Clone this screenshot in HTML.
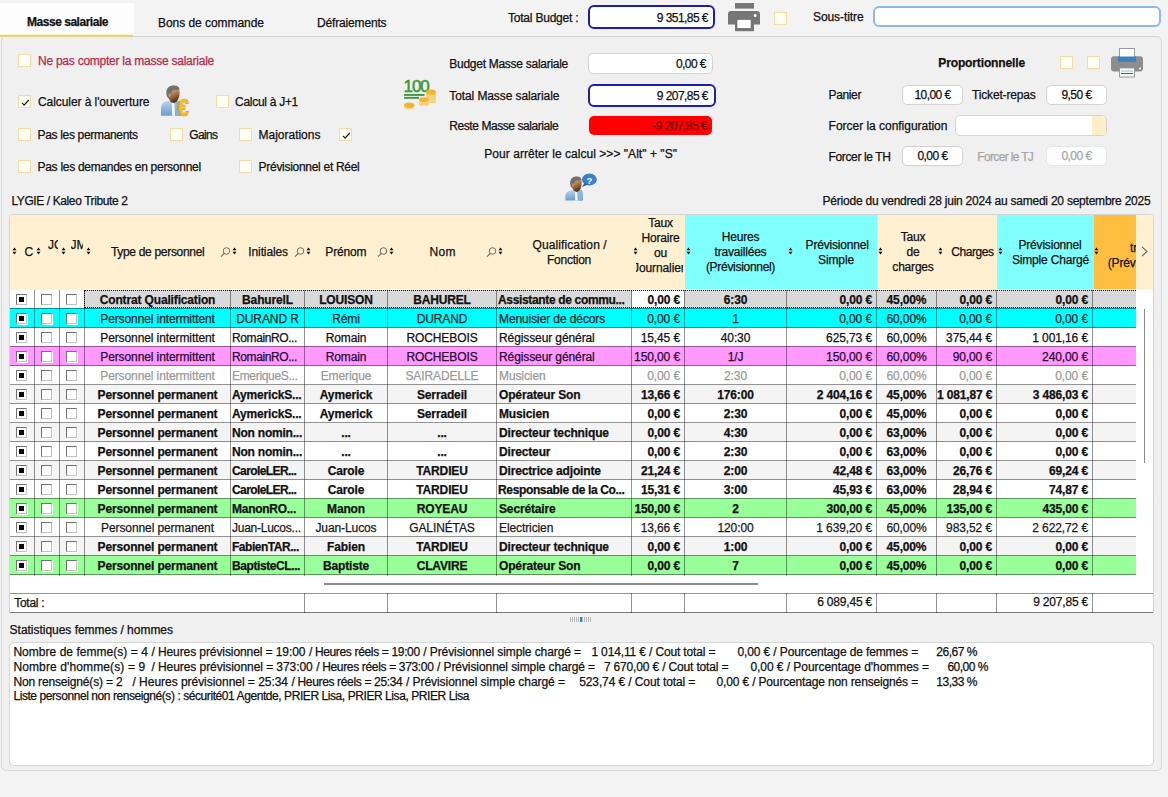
<!DOCTYPE html>
<html><head><meta charset="utf-8"><title>Masse salariale</title><style>
html,body{margin:0;padding:0;}
body{width:1168px;height:797px;overflow:hidden;background:#f3f3f3;position:relative;font-family:"Liberation Sans",sans-serif;font-size:12px;color:#111;}
.a{position:absolute;}
.t{position:absolute;white-space:nowrap;line-height:14px;-webkit-text-stroke:0.25px currentColor;}
.cb{position:absolute;width:13px;height:13px;box-sizing:border-box;border:1px solid #f4dca4;background:#fffff4;}
.gcb{position:absolute;width:11px;height:11px;box-sizing:border-box;border:1px solid;border-color:#727272 #c2c2c2 #c2c2c2 #727272;background:#fff;box-shadow:1px 1px 0 #fff;}
.gcb i{position:absolute;left:2px;top:2px;width:5px;height:5px;background:#000;}
</style></head><body>
<div class="a" style="left:0px;top:3px;width:134px;height:32px;background:#fdfdfd;"></div>
<div class="a" style="left:0px;top:35px;width:133px;height:2px;background:#ebd38e;"></div>
<div class="t" style="left:27px;top:14.8px;font-size:12px;font-weight:bold;letter-spacing:-0.471px;">Masse salariale</div>
<div class="t" style="left:158px;top:15.8px;font-size:12px;letter-spacing:-0.046px;">Bons de commande</div>
<div class="t" style="left:317px;top:15.8px;font-size:12px;letter-spacing:-0.163px;">Défraiements</div>
<div class="t" style="left:508px;top:10.8px;font-size:12px;letter-spacing:-0.213px;">Total Budget :</div>
<div class="a" style="left:588px;top:5px;width:127px;height:24px;box-sizing:border-box;border:2px solid #1c1cb8;border-radius:6px;background:#fff;"></div>
<div class="t" style="left:590px;top:11px;width:118px;text-align:right;letter-spacing:-0.55px">9 351,85 €</div>
<svg class="a" style="left:726px;top:1px" width="36" height="32" viewBox="726 1 36 32">
<rect x="735" y="3" width="19" height="5.6" fill="#767676"/>
<path d="M731 11 H757 Q760 11 760 14 V24.6 H728 V14 Q728 11 731 11 Z" fill="#767676"/>
<rect x="735" y="11" width="19" height="20.2" fill="#767676"/>
<rect x="737.4" y="19.9" width="13.3" height="8.1" fill="#fff"/>
<circle cx="755.2" cy="15.6" r="1.5" fill="#fff"/>
</svg>
<div class="cb" style="left:774px;top:12px"></div>
<div class="t" style="left:813px;top:9.8px;font-size:12px;letter-spacing:-0.085px;">Sous-titre</div>
<div class="a" style="left:873px;top:6px;width:288px;height:21px;box-sizing:border-box;border:2px solid #8fb8e6;border-radius:6px;background:#fff;"></div>
<div class="a" style="left:1px;top:36px;width:1161px;height:735px;box-sizing:border-box;border:1px solid #d6d6d6;border-radius:5px;background:#f0f0f0;"></div>
<div class="a" style="left:0px;top:34px;width:133px;height:1px;background:#fbf3c8;"></div>
<div class="a" style="left:0px;top:35px;width:133px;height:2px;background:#e6cf86;"></div>
<div class="a" style="left:0px;top:37px;width:133px;height:1px;background:#f8f0cc;"></div>
<div class="cb" style="left:18px;top:54px"></div>
<div class="t" style="left:38px;top:53.8px;font-size:12px;color:#b52a4c;letter-spacing:-0.245px;">Ne pas compter la masse salariale</div>
<div class="cb" style="left:18px;top:95px"><svg width="13" height="13" style="position:absolute;left:0;top:0"><path d="M3 6.9 L5.1 9.1 L9.8 4.0" fill="none" stroke="#1e1e28" stroke-width="1.25"/></svg></div>
<div class="t" style="left:38px;top:94.8px;font-size:12px;letter-spacing:-0.073px;">Calculer à l'ouverture</div>
<div class="cb" style="left:216px;top:95px"></div>
<div class="t" style="left:235px;top:94.8px;font-size:12px;letter-spacing:-0.281px;">Calcul à J+1</div>
<div class="cb" style="left:18px;top:128px"></div>
<div class="t" style="left:37.5px;top:127.8px;font-size:12px;letter-spacing:-0.325px;">Pas les permanents</div>
<div class="cb" style="left:170px;top:128px"></div>
<div class="t" style="left:189.3px;top:127.8px;font-size:12px;letter-spacing:-0.669px;">Gains</div>
<div class="cb" style="left:239px;top:128px"></div>
<div class="t" style="left:258.6px;top:127.8px;font-size:12px;letter-spacing:-0.021px;">Majorations</div>
<div class="cb" style="left:339px;top:128px"><svg width="13" height="13" style="position:absolute;left:0;top:0"><path d="M3 6.9 L5.1 9.1 L9.8 4.0" fill="none" stroke="#1e1e28" stroke-width="1.25"/></svg></div>
<div class="cb" style="left:18px;top:160px"></div>
<div class="t" style="left:37.5px;top:159.8px;font-size:12px;letter-spacing:-0.281px;">Pas les demandes en personnel</div>
<div class="cb" style="left:239px;top:160px"></div>
<div class="t" style="left:258.6px;top:159.8px;font-size:12px;letter-spacing:-0.291px;">Prévisionnel et Réel</div>
<div class="t" style="left:11.4px;top:193.8px;font-size:12px;letter-spacing:-0.395px;">LYGIE / Kaleo Tribute 2</div>
<div class="t" style="left:449.3px;top:56.8px;font-size:12px;letter-spacing:-0.274px;">Budget Masse salariale</div>
<div class="a" style="left:588px;top:53px;width:125px;height:21px;box-sizing:border-box;border:1px solid #d3d3d3;border-radius:5px;background:#fff;"></div>
<div class="t" style="left:590px;top:57px;width:116px;text-align:right;letter-spacing:-0.55px">0,00 €</div>
<div class="t" style="left:449.3px;top:88.8px;font-size:12px;letter-spacing:-0.097px;">Total Masse salariale</div>
<div class="a" style="left:588px;top:84px;width:128px;height:23px;box-sizing:border-box;border:2px solid #1c1cb8;border-radius:6px;background:#fff;"></div>
<div class="t" style="left:590px;top:89px;width:118px;text-align:right;letter-spacing:-0.55px">9 207,85 €</div>
<div class="t" style="left:449.3px;top:119.3px;font-size:12px;letter-spacing:-0.431px;">Reste Masse salariale</div>
<div class="a" style="left:589px;top:116px;width:123px;height:19px;border-radius:5px;background:#ff0000;"></div>
<div class="t" style="left:590px;top:119px;width:117px;text-align:right;letter-spacing:-0.55px;color:#640000">-9 207,85 €</div>
<div class="t" style="left:484.3px;top:146.8px;font-size:12px;letter-spacing:0.041px;">Pour arrêter le calcul &gt;&gt;&gt; "Alt" + "S"</div>
<div class="t" style="left:938.3px;top:55.8px;font-size:12px;font-weight:bold;letter-spacing:-0.131px;">Proportionnelle</div>
<div class="cb" style="left:1060px;top:56px"></div>
<div class="cb" style="left:1087px;top:56px"></div>
<div class="t" style="left:828.6px;top:88.3px;font-size:12px;letter-spacing:-0.381px;">Panier</div>
<div class="a" style="left:902px;top:85px;width:61px;height:20px;box-sizing:border-box;border:1px solid #d3d3d3;border-radius:5px;background:#fff;"></div>
<div class="t" style="left:902px;top:88px;width:61px;text-align:center;letter-spacing:-0.55px">10,00 €</div>
<div class="t" style="left:972px;top:88.3px;font-size:12px;letter-spacing:-0.164px;">Ticket-repas</div>
<div class="a" style="left:1046px;top:85px;width:61px;height:20px;box-sizing:border-box;border:1px solid #d3d3d3;border-radius:5px;background:#fff;"></div>
<div class="t" style="left:1046px;top:88px;width:61px;text-align:center;letter-spacing:-0.55px">9,50 €</div>
<div class="t" style="left:828.6px;top:118.8px;font-size:12px;letter-spacing:-0.026px;">Forcer la configuration</div>
<div class="a" style="left:955px;top:115px;width:152px;height:21px;box-sizing:border-box;border:1px solid #d3d3d3;border-radius:5px;background:#fff;overflow:hidden;"></div>
<div class="a" style="left:1092px;top:116px;width:14px;height:19px;background:#fdf0c8;border-radius:0 4px 4px 0;"></div>
<div class="t" style="left:828.6px;top:149.8px;font-size:12px;letter-spacing:-0.371px;">Forcer le TH</div>
<div class="a" style="left:902px;top:146px;width:61px;height:20px;box-sizing:border-box;border:1px solid #d3d3d3;border-radius:5px;background:#fff;"></div>
<div class="t" style="left:902px;top:149px;width:61px;text-align:center;letter-spacing:-0.55px">0,00 €</div>
<div class="t" style="left:977.3px;top:149.8px;font-size:12px;color:#a6a6a6;letter-spacing:-0.658px;">Forcer le TJ</div>
<div class="a" style="left:1046px;top:146px;width:61px;height:20px;box-sizing:border-box;border:1px solid #e6e6e6;border-radius:5px;background:#fdfdfd;"></div>
<div class="t" style="left:1046px;top:149px;width:61px;text-align:center;letter-spacing:-0.55px;color:#a6a6a6">0,00 €</div>
<div class="t" style="left:822.6px;top:194.4px;font-size:12px;letter-spacing:-0.229px;">Période du vendredi 28 juin 2024 au samedi 20 septembre 2025</div>
<svg class="a" style="left:1108px;top:45px" width="38" height="36" viewBox="1108 45 38 36">
<path d="M1114 56.3 H1140 Q1143 56.3 1143 59.3 V68.6 Q1143 71.6 1140 71.6 H1114 Q1111 71.6 1111 68.6 V59.3 Q1111 56.3 1114 56.3 Z" fill="#8d8d8d"/>
<rect x="1119.5" y="48.5" width="15" height="9" fill="#fff" stroke="#999" stroke-width="1"/>
<rect x="1118" y="56.5" width="18" height="5.3" fill="#3b80c2"/>
<rect x="1119.5" y="68" width="15" height="9" fill="#fff" stroke="#999" stroke-width="1"/>
<rect x="1121" y="70.4" width="12" height="1.2" fill="#a8c4dc"/>
<rect x="1121" y="73" width="12" height="1" fill="#45617a"/>
<circle cx="1140" cy="68.6" r="1" fill="#fff"/>
</svg>
<svg class="a" style="left:398px;top:74px" width="44" height="40" viewBox="398 74 44 40">
<text x="403.6" y="92.3" font-family="Liberation Sans" font-size="17" fill="#3a9a3e" stroke="#3a9a3e" stroke-width="0.55" letter-spacing="-1.1">100</text>
<rect x="404" y="94" width="20.5" height="1.9" fill="#3d9a3d"/>
<rect x="404" y="96.9" width="15" height="1.9" fill="#3d9a3d"/>
<g>
<rect x="426" y="91" width="10" height="12" rx="2" fill="#fbd98c"/>
<path d="M426 94.5 h10 M426 97 h10 M426 99.5 h10 M426 102 h10" stroke="#f5c050" stroke-width="0.7"/>
<ellipse cx="431" cy="92" rx="5" ry="2.5" fill="#f2b431"/>
<rect x="419.2" y="98.5" width="9.6" height="7.5" rx="2" fill="#fbd98c"/>
<path d="M419.2 101.5 h9.6 M419.2 104 h9.6" stroke="#f5c050" stroke-width="0.7"/>
<ellipse cx="424" cy="99.8" rx="4.8" ry="2.5" fill="#f2b431"/>
<rect x="404" y="103.5" width="10.3" height="5.8" rx="2.5" fill="#fbd98c"/>
<ellipse cx="409.2" cy="105.3" rx="5.1" ry="2.7" fill="#f2b431"/>
</g>
</svg>
<svg class="a" style="left:156px;top:80px" width="40" height="40" viewBox="156 80 40 40"><g transform="translate(160,81.5) scale(0.98)">
<defs>
<linearGradient id="ska" x1="0" y1="0" x2="0.3" y2="1"><stop offset="0" stop-color="#ecc498"/><stop offset="0.55" stop-color="#b88050"/><stop offset="1" stop-color="#5a3418"/></linearGradient>
<linearGradient id="bda" x1="0" y1="0" x2="0" y2="1"><stop offset="0" stop-color="#b4d4f4"/><stop offset="1" stop-color="#6e9cca"/></linearGradient>
</defs>
<path d="M1 35 V27 Q1 21 8 20 L12 19.5 L20 19.5 Q21.5 20 21.5 24 V35 Z" fill="url(#bda)"/>
<path d="M12 19.5 L14.5 23 L15.5 35 H12.5 Z" fill="#f4f8fc"/>
<path d="M16 20 Q19 19.5 20.5 21 V35 H16.5 Z" fill="#8cb2dc"/>
<path d="M8 12 Q8 4 14 4 Q20 4 20 11 Q20 20 14.5 22 Q10.5 22 9 17 Z" fill="url(#ska)"/>
<path d="M6.5 13 Q6 4.5 13 4 Q19.5 3.5 20 8.5 Q15 8 12.5 9.5 Q11 12 10.5 16 L9 17.5 Q7 16 6.5 13 Z" fill="#707070"/>
<ellipse cx="9.8" cy="14" rx="1.2" ry="2" fill="#c89468"/>
</g><text transform="translate(177.8,116.2) scale(0.82,1)" x="0" y="0" font-family="Liberation Sans" font-weight="bold" font-size="24.5" fill="#f7c520" stroke="#e39c00" stroke-width="0.7">€</text></svg>
<svg class="a" style="left:560px;top:168px" width="44" height="36" viewBox="560 168 44 36"><g transform="translate(564.5,173) scale(0.86)">
<defs>
<linearGradient id="skb" x1="0" y1="0" x2="0.3" y2="1"><stop offset="0" stop-color="#ecc498"/><stop offset="0.55" stop-color="#b88050"/><stop offset="1" stop-color="#5a3418"/></linearGradient>
<linearGradient id="bdb" x1="0" y1="0" x2="0" y2="1"><stop offset="0" stop-color="#b4d4f4"/><stop offset="1" stop-color="#6e9cca"/></linearGradient>
</defs>
<path d="M1 32 V27 Q1 21 8 20 L12 19.5 L20 19.5 Q21.5 20 21.5 24 V32 Z" fill="url(#bdb)"/>
<path d="M12 19.5 L14.5 23 L15.5 32 H12.5 Z" fill="#f4f8fc"/>
<path d="M16 20 Q19 19.5 20.5 21 V32 H16.5 Z" fill="#8cb2dc"/>
<path d="M8 12 Q8 4 14 4 Q20 4 20 11 Q20 20 14.5 22 Q10.5 22 9 17 Z" fill="url(#skb)"/>
<path d="M6.5 13 Q6 4.5 13 4 Q19.5 3.5 20 8.5 Q15 8 12.5 9.5 Q11 12 10.5 16 L9 17.5 Q7 16 6.5 13 Z" fill="#707070"/>
<ellipse cx="9.8" cy="14" rx="1.2" ry="2" fill="#c89468"/>
</g><ellipse cx="589.4" cy="179.5" rx="7.4" ry="6" fill="#3a80cc"/><path d="M584.5 183 L582 187 L588 184.5 Z" fill="#2a5ea8"/><text x="586.6" y="183.6" font-family="Liberation Sans" font-weight="bold" font-size="9.5" fill="#fff">?</text></svg>
<div class="a" style="left:9px;top:214px;width:1145px;height:399px;box-sizing:border-box;border:1px solid #d4d4d4;border-radius:4px 4px 0 0;background:#fff;"></div>
<div class="a" style="left:10px;top:215px;width:675px;height:74px;background:#fff0d2;border-top-left-radius:3px;"></div>
<div class="a" style="left:685px;top:215px;width:192px;height:74px;background:#80ffff;"></div>
<div class="a" style="left:877px;top:215px;width:120px;height:74px;background:#fff0d2;"></div>
<div class="a" style="left:997px;top:215px;width:96px;height:74px;background:#80ffff;"></div>
<div class="a" style="left:1093px;top:215px;width:43px;height:74px;background:#ffbe40;"></div>
<div class="a" style="left:1136px;top:215px;width:17px;height:74px;background:#fff0d2;border-top-right-radius:3px;"></div>
<div class="a" style="left:10px;top:289px;width:1143px;height:1px;background:rgba(255,250,90,0.55);"></div>
<div class="a" style="left:1093px;top:215px;width:1px;height:74px;background:#d8e8a0;"></div>
<svg class="a" style="left:11.5px;top:247.3px" width="5" height="8" viewBox="0 0 5 8"><path d="M2.5 0.5 L4.5 3.2 H0.5 Z M0.5 4.7 H4.5 L2.5 7.4 Z" fill="#111"/></svg>
<svg class="a" style="left:35.9px;top:247.3px" width="5" height="8" viewBox="0 0 5 8"><path d="M2.5 0.5 L4.5 3.2 H0.5 Z M0.5 4.7 H4.5 L2.5 7.4 Z" fill="#111"/></svg>
<svg class="a" style="left:60.9px;top:247.3px" width="5" height="8" viewBox="0 0 5 8"><path d="M2.5 0.5 L4.5 3.2 H0.5 Z M0.5 4.7 H4.5 L2.5 7.4 Z" fill="#111"/></svg>
<svg class="a" style="left:85.9px;top:247.3px" width="5" height="8" viewBox="0 0 5 8"><path d="M2.5 0.5 L4.5 3.2 H0.5 Z M0.5 4.7 H4.5 L2.5 7.4 Z" fill="#111"/></svg>
<svg class="a" style="left:231.9px;top:247.3px" width="5" height="8" viewBox="0 0 5 8"><path d="M2.5 0.5 L4.5 3.2 H0.5 Z M0.5 4.7 H4.5 L2.5 7.4 Z" fill="#111"/></svg>
<svg class="a" style="left:305.9px;top:247.3px" width="5" height="8" viewBox="0 0 5 8"><path d="M2.5 0.5 L4.5 3.2 H0.5 Z M0.5 4.7 H4.5 L2.5 7.4 Z" fill="#111"/></svg>
<svg class="a" style="left:388.9px;top:247.3px" width="5" height="8" viewBox="0 0 5 8"><path d="M2.5 0.5 L4.5 3.2 H0.5 Z M0.5 4.7 H4.5 L2.5 7.4 Z" fill="#111"/></svg>
<svg class="a" style="left:497.9px;top:247.3px" width="5" height="8" viewBox="0 0 5 8"><path d="M2.5 0.5 L4.5 3.2 H0.5 Z M0.5 4.7 H4.5 L2.5 7.4 Z" fill="#111"/></svg>
<svg class="a" style="left:632.9px;top:247.3px" width="5" height="8" viewBox="0 0 5 8"><path d="M2.5 0.5 L4.5 3.2 H0.5 Z M0.5 4.7 H4.5 L2.5 7.4 Z" fill="#111"/></svg>
<svg class="a" style="left:685.9px;top:247.3px" width="5" height="8" viewBox="0 0 5 8"><path d="M2.5 0.5 L4.5 3.2 H0.5 Z M0.5 4.7 H4.5 L2.5 7.4 Z" fill="#111"/></svg>
<svg class="a" style="left:787.9px;top:247.3px" width="5" height="8" viewBox="0 0 5 8"><path d="M2.5 0.5 L4.5 3.2 H0.5 Z M0.5 4.7 H4.5 L2.5 7.4 Z" fill="#111"/></svg>
<svg class="a" style="left:877.9px;top:247.3px" width="5" height="8" viewBox="0 0 5 8"><path d="M2.5 0.5 L4.5 3.2 H0.5 Z M0.5 4.7 H4.5 L2.5 7.4 Z" fill="#111"/></svg>
<svg class="a" style="left:937.9px;top:247.3px" width="5" height="8" viewBox="0 0 5 8"><path d="M2.5 0.5 L4.5 3.2 H0.5 Z M0.5 4.7 H4.5 L2.5 7.4 Z" fill="#111"/></svg>
<svg class="a" style="left:997.9px;top:247.3px" width="5" height="8" viewBox="0 0 5 8"><path d="M2.5 0.5 L4.5 3.2 H0.5 Z M0.5 4.7 H4.5 L2.5 7.4 Z" fill="#111"/></svg>
<svg class="a" style="left:1093.9px;top:247.3px" width="5" height="8" viewBox="0 0 5 8"><path d="M2.5 0.5 L4.5 3.2 H0.5 Z M0.5 4.7 H4.5 L2.5 7.4 Z" fill="#111"/></svg>
<svg class="a" style="left:220px;top:245.5px" width="11" height="12" viewBox="0 0 11 12"><circle cx="6.5" cy="5" r="3.3" fill="none" stroke="#6a6152" stroke-width="0.95"/><path d="M4.2 7.4 L1.3 10.3" stroke="#6a6152" stroke-width="1.05" stroke-linecap="round"/></svg>
<svg class="a" style="left:294px;top:245.5px" width="11" height="12" viewBox="0 0 11 12"><circle cx="6.5" cy="5" r="3.3" fill="none" stroke="#6a6152" stroke-width="0.95"/><path d="M4.2 7.4 L1.3 10.3" stroke="#6a6152" stroke-width="1.05" stroke-linecap="round"/></svg>
<svg class="a" style="left:377px;top:245.5px" width="11" height="12" viewBox="0 0 11 12"><circle cx="6.5" cy="5" r="3.3" fill="none" stroke="#6a6152" stroke-width="0.95"/><path d="M4.2 7.4 L1.3 10.3" stroke="#6a6152" stroke-width="1.05" stroke-linecap="round"/></svg>
<svg class="a" style="left:486px;top:245.5px" width="11" height="12" viewBox="0 0 11 12"><circle cx="6.5" cy="5" r="3.3" fill="none" stroke="#6a6152" stroke-width="0.95"/><path d="M4.2 7.4 L1.3 10.3" stroke="#6a6152" stroke-width="1.05" stroke-linecap="round"/></svg>
<div class="t" style="left:24.6px;top:244.8px;font-size:12px;letter-spacing:0.000px;">C</div>
<div class="t" style="left:48px;top:238px;width:10px;overflow:hidden;font-size:12px;line-height:14px">JC</div>
<div class="t" style="left:70.5px;top:238px;width:12.5px;overflow:hidden;font-size:12px;line-height:14px">JM</div>
<div class="t" style="left:110.9px;top:244.8px;font-size:12px;letter-spacing:-0.308px;">Type de personnel</div>
<div class="t" style="left:248.3px;top:244.8px;font-size:12px;letter-spacing:-0.110px;">Initiales</div>
<div class="t" style="left:325.3px;top:244.8px;font-size:12px;letter-spacing:-0.153px;">Prénom</div>
<div class="t" style="left:429.4px;top:244.8px;font-size:12px;letter-spacing:0.355px;">Nom</div>
<div class="t" style="left:532.5px;top:237.8px;font-size:12px;letter-spacing:0.107px;">Qualification /</div>
<div class="t" style="left:547px;top:252.8px;font-size:12px;letter-spacing:-0.253px;">Fonction</div>
<div class="t" style="left:637px;top:216px;width:47px;text-align:center;letter-spacing:-0.2px;color:#111;overflow:hidden;line-height:15px">Taux</div>
<div class="t" style="left:637px;top:231px;width:47px;text-align:center;letter-spacing:-0.2px;color:#111;overflow:hidden;line-height:15px">Horaire</div>
<div class="t" style="left:637px;top:246px;width:47px;text-align:center;letter-spacing:-0.2px;color:#111;overflow:hidden;line-height:15px">ou</div>
<div class="t" style="left:636px;top:261px;width:47px;overflow:hidden;line-height:15px;white-space:nowrap"><span style="position:relative;left:-3px;letter-spacing:-0.1px">Journalier</span></div>
<div class="t" style="left:695px;top:230px;width:91px;text-align:center;letter-spacing:-0.2px;color:#111;overflow:hidden;line-height:15px">Heures</div>
<div class="t" style="left:695px;top:245px;width:91px;text-align:center;letter-spacing:-0.2px;color:#111;overflow:hidden;line-height:15px">travaillées</div>
<div class="t" style="left:695px;top:260px;width:91px;text-align:center;letter-spacing:-0.3px;color:#111;overflow:hidden;line-height:15px">(Prévisionnel)</div>
<div class="t" style="left:805.6px;top:237.8px;font-size:12px;letter-spacing:-0.197px;">Prévisionnel</div>
<div class="t" style="left:818px;top:252.8px;font-size:12px;letter-spacing:-0.113px;">Simple</div>
<div class="t" style="left:890px;top:230px;width:46px;text-align:center;letter-spacing:-0.2px;color:#111;overflow:hidden;line-height:15px">Taux</div>
<div class="t" style="left:890px;top:245px;width:46px;text-align:center;letter-spacing:-0.2px;color:#111;overflow:hidden;line-height:15px">de</div>
<div class="t" style="left:890px;top:260px;width:46px;text-align:center;letter-spacing:-0.2px;color:#111;overflow:hidden;line-height:15px">charges</div>
<div class="t" style="left:951.3px;top:244.8px;font-size:12px;letter-spacing:-0.422px;">Charges</div>
<div class="t" style="left:1018.5px;top:237.8px;font-size:12px;letter-spacing:-0.197px;">Prévisionnel</div>
<div class="t" style="left:1012px;top:252.8px;font-size:12px;letter-spacing:-0.182px;">Simple Chargé</div>
<div class="t" style="left:1093px;top:241px;width:43px;height:36px;overflow:hidden;line-height:15px;white-space:nowrap"><div style="position:absolute;left:37px;top:0">tr</div><div style="position:absolute;left:14.8px;top:15px;letter-spacing:-0.2px">(Prévisionnel)</div></div>
<svg class="a" style="left:1140px;top:245px" width="9" height="13" viewBox="0 0 9 13"><path d="M2 1.8 L7 6.5 L2 11.2" fill="none" stroke="#666" stroke-width="1.1"/></svg>
<div class="a" style="left:10px;top:290px;width:1126px;height:19px;background:#d9d9d9;"></div>
<div class="a" style="left:10px;top:290px;width:74px;height:18px;background:#fff;"></div>
<div class="a" style="left:632px;top:290px;width:52px;height:18px;background:#fff;"></div>
<div class="a" style="left:10px;top:328px;width:1126px;height:19px;background:#ffffff;"></div>
<div class="a" style="left:10px;top:366px;width:1126px;height:19px;background:#ffffff;"></div>
<div class="a" style="left:10px;top:385px;width:1126px;height:19px;background:#f4f4f4;"></div>
<div class="a" style="left:10px;top:404px;width:1126px;height:19px;background:#ffffff;"></div>
<div class="a" style="left:10px;top:423px;width:1126px;height:19px;background:#f4f4f4;"></div>
<div class="a" style="left:10px;top:442px;width:1126px;height:19px;background:#ffffff;"></div>
<div class="a" style="left:10px;top:461px;width:1126px;height:19px;background:#f4f4f4;"></div>
<div class="a" style="left:10px;top:480px;width:1126px;height:19px;background:#ffffff;"></div>
<div class="a" style="left:10px;top:518px;width:1126px;height:19px;background:#ffffff;"></div>
<div class="a" style="left:10px;top:537px;width:1126px;height:19px;background:#f4f4f4;"></div>
<div class="a" style="left:10px;top:308px;width:1126px;height:20px;background:#00ffff;"></div>
<div class="a" style="left:10px;top:346px;width:1126px;height:20px;background:#ff99ff;"></div>
<div class="a" style="left:10px;top:498px;width:1126px;height:20px;background:#99ff99;"></div>
<div class="a" style="left:10px;top:555px;width:1126px;height:20px;background:#99ff99;"></div>
<div class="a" style="left:10px;top:308px;width:1126px;height:1px;background:rgba(0,0,0,0.42);"></div>
<div class="a" style="left:10px;top:327px;width:1126px;height:1px;background:rgba(0,0,0,0.42);"></div>
<div class="a" style="left:10px;top:346px;width:1126px;height:1px;background:rgba(0,0,0,0.42);"></div>
<div class="a" style="left:10px;top:365px;width:1126px;height:1px;background:rgba(0,0,0,0.42);"></div>
<div class="a" style="left:10px;top:384px;width:1126px;height:1px;background:rgba(0,0,0,0.42);"></div>
<div class="a" style="left:10px;top:403px;width:1126px;height:1px;background:rgba(0,0,0,0.42);"></div>
<div class="a" style="left:10px;top:422px;width:1126px;height:1px;background:rgba(0,0,0,0.42);"></div>
<div class="a" style="left:10px;top:441px;width:1126px;height:1px;background:rgba(0,0,0,0.42);"></div>
<div class="a" style="left:10px;top:460px;width:1126px;height:1px;background:rgba(0,0,0,0.42);"></div>
<div class="a" style="left:10px;top:479px;width:1126px;height:1px;background:rgba(0,0,0,0.42);"></div>
<div class="a" style="left:10px;top:498px;width:1126px;height:1px;background:rgba(0,0,0,0.42);"></div>
<div class="a" style="left:10px;top:517px;width:1126px;height:1px;background:rgba(0,0,0,0.42);"></div>
<div class="a" style="left:10px;top:536px;width:1126px;height:1px;background:rgba(0,0,0,0.42);"></div>
<div class="a" style="left:10px;top:555px;width:1126px;height:1px;background:rgba(0,0,0,0.42);"></div>
<div class="a" style="left:10px;top:574px;width:1126px;height:1px;background:rgba(0,0,0,0.42);"></div>
<div class="gcb" style="left:16px;top:294px"><i></i></div>
<div class="gcb" style="left:41px;top:294px"></div>
<div class="gcb" style="left:66px;top:294px"></div>
<div class="t" style="left:85px;top:290px;width:145px;height:18px;line-height:21px;text-align:center;font-weight:bold;letter-spacing:-0.15px;overflow:hidden;white-space:nowrap">Contrat Qualification</div>
<div class="t" style="left:231px;top:290px;width:73px;height:18px;line-height:21px;text-align:center;font-weight:bold;letter-spacing:-0.15px;overflow:hidden;white-space:nowrap">BahurelL</div>
<div class="t" style="left:305px;top:290px;width:82px;height:18px;line-height:21px;text-align:center;font-weight:bold;letter-spacing:-0.15px;overflow:hidden;white-space:nowrap">LOUISON</div>
<div class="t" style="left:388px;top:290px;width:108px;height:18px;line-height:21px;text-align:center;font-weight:bold;letter-spacing:-0.15px;overflow:hidden;white-space:nowrap">BAHUREL</div>
<div class="t" style="left:497px;top:290px;width:134px;height:18px;line-height:21px;text-align:left;padding-left:1px;box-sizing:border-box;font-weight:bold;letter-spacing:-0.343px;overflow:hidden;white-space:nowrap">Assistante de commu...</div>
<div class="t" style="left:632px;top:290px;width:52px;height:18px;line-height:21px;text-align:right;padding-right:4px;box-sizing:border-box;font-weight:bold;letter-spacing:-0.15px;overflow:hidden;white-space:nowrap">0,00 €</div>
<div class="t" style="left:685px;top:290px;width:101px;height:18px;line-height:21px;text-align:center;font-weight:bold;letter-spacing:-0.15px;overflow:hidden;white-space:nowrap">6:30</div>
<div class="t" style="left:787px;top:290px;width:89px;height:18px;line-height:21px;text-align:right;padding-right:4px;box-sizing:border-box;font-weight:bold;letter-spacing:-0.15px;overflow:hidden;white-space:nowrap">0,00 €</div>
<div class="t" style="left:877px;top:290px;width:59px;height:18px;line-height:21px;text-align:center;font-weight:bold;letter-spacing:-0.15px;overflow:hidden;white-space:nowrap">45,00%</div>
<div class="t" style="left:937px;top:290px;width:59px;height:18px;line-height:21px;text-align:right;padding-right:4px;box-sizing:border-box;font-weight:bold;letter-spacing:-0.15px;overflow:hidden;white-space:nowrap">0,00 €</div>
<div class="t" style="left:997px;top:290px;width:95px;height:18px;line-height:21px;text-align:right;padding-right:4px;box-sizing:border-box;font-weight:bold;letter-spacing:-0.15px;overflow:hidden;white-space:nowrap">0,00 €</div>
<div class="gcb" style="left:16px;top:313px"><i></i></div>
<div class="gcb" style="left:41px;top:313px"></div>
<div class="gcb" style="left:66px;top:313px"></div>
<div class="t" style="left:85px;top:309px;width:145px;height:18px;line-height:21px;text-align:center;letter-spacing:-0.1px;color:#0a1a28;overflow:hidden;white-space:nowrap">Personnel intermittent</div>
<div class="t" style="left:231px;top:309px;width:73px;height:18px;line-height:21px;text-align:center;letter-spacing:-0.1px;color:#0a1a28;overflow:hidden;white-space:nowrap">DURAND R</div>
<div class="t" style="left:305px;top:309px;width:82px;height:18px;line-height:21px;text-align:center;letter-spacing:-0.1px;color:#0a1a28;overflow:hidden;white-space:nowrap">Rémi</div>
<div class="t" style="left:388px;top:309px;width:108px;height:18px;line-height:21px;text-align:center;letter-spacing:-0.1px;color:#0a1a28;overflow:hidden;white-space:nowrap">DURAND</div>
<div class="t" style="left:497px;top:309px;width:134px;height:18px;line-height:21px;text-align:left;padding-left:2px;box-sizing:border-box;letter-spacing:-0.1px;color:#0a1a28;overflow:hidden;white-space:nowrap">Menuisier de décors</div>
<div class="t" style="left:632px;top:309px;width:52px;height:18px;line-height:21px;text-align:right;padding-right:4px;box-sizing:border-box;letter-spacing:-0.1px;color:#0a1a28;overflow:hidden;white-space:nowrap">0,00 €</div>
<div class="t" style="left:685px;top:309px;width:101px;height:18px;line-height:21px;text-align:center;letter-spacing:-0.1px;color:#0a1a28;overflow:hidden;white-space:nowrap">1</div>
<div class="t" style="left:787px;top:309px;width:89px;height:18px;line-height:21px;text-align:right;padding-right:4px;box-sizing:border-box;letter-spacing:-0.1px;color:#0a1a28;overflow:hidden;white-space:nowrap">0,00 €</div>
<div class="t" style="left:877px;top:309px;width:59px;height:18px;line-height:21px;text-align:center;letter-spacing:-0.1px;color:#0a1a28;overflow:hidden;white-space:nowrap">60,00%</div>
<div class="t" style="left:937px;top:309px;width:59px;height:18px;line-height:21px;text-align:right;padding-right:4px;box-sizing:border-box;letter-spacing:-0.1px;color:#0a1a28;overflow:hidden;white-space:nowrap">0,00 €</div>
<div class="t" style="left:997px;top:309px;width:95px;height:18px;line-height:21px;text-align:right;padding-right:4px;box-sizing:border-box;letter-spacing:-0.1px;color:#0a1a28;overflow:hidden;white-space:nowrap">0,00 €</div>
<div class="gcb" style="left:16px;top:332px"><i></i></div>
<div class="gcb" style="left:41px;top:332px"></div>
<div class="gcb" style="left:66px;top:332px"></div>
<div class="t" style="left:85px;top:328px;width:145px;height:18px;line-height:21px;text-align:center;letter-spacing:-0.1px;overflow:hidden;white-space:nowrap">Personnel intermittent</div>
<div class="t" style="left:231px;top:328px;width:73px;height:18px;line-height:21px;text-align:left;padding-left:1px;box-sizing:border-box;letter-spacing:-0.396px;overflow:hidden;white-space:nowrap">RomainRO...</div>
<div class="t" style="left:305px;top:328px;width:82px;height:18px;line-height:21px;text-align:center;letter-spacing:-0.1px;overflow:hidden;white-space:nowrap">Romain</div>
<div class="t" style="left:388px;top:328px;width:108px;height:18px;line-height:21px;text-align:center;letter-spacing:-0.1px;overflow:hidden;white-space:nowrap">ROCHEBOIS</div>
<div class="t" style="left:497px;top:328px;width:134px;height:18px;line-height:21px;text-align:left;padding-left:2px;box-sizing:border-box;letter-spacing:-0.1px;overflow:hidden;white-space:nowrap">Régisseur général</div>
<div class="t" style="left:632px;top:328px;width:52px;height:18px;line-height:21px;text-align:right;padding-right:4px;box-sizing:border-box;letter-spacing:-0.1px;overflow:hidden;white-space:nowrap">15,45 €</div>
<div class="t" style="left:685px;top:328px;width:101px;height:18px;line-height:21px;text-align:center;letter-spacing:-0.1px;overflow:hidden;white-space:nowrap">40:30</div>
<div class="t" style="left:787px;top:328px;width:89px;height:18px;line-height:21px;text-align:right;padding-right:4px;box-sizing:border-box;letter-spacing:-0.1px;overflow:hidden;white-space:nowrap">625,73 €</div>
<div class="t" style="left:877px;top:328px;width:59px;height:18px;line-height:21px;text-align:center;letter-spacing:-0.1px;overflow:hidden;white-space:nowrap">60,00%</div>
<div class="t" style="left:937px;top:328px;width:59px;height:18px;line-height:21px;text-align:right;padding-right:4px;box-sizing:border-box;letter-spacing:-0.1px;overflow:hidden;white-space:nowrap">375,44 €</div>
<div class="t" style="left:997px;top:328px;width:95px;height:18px;line-height:21px;text-align:right;padding-right:4px;box-sizing:border-box;letter-spacing:-0.1px;overflow:hidden;white-space:nowrap">1 001,16 €</div>
<div class="gcb" style="left:16px;top:351px"><i></i></div>
<div class="gcb" style="left:41px;top:351px"></div>
<div class="gcb" style="left:66px;top:351px"></div>
<div class="t" style="left:85px;top:347px;width:145px;height:18px;line-height:21px;text-align:center;letter-spacing:-0.1px;color:#280a30;overflow:hidden;white-space:nowrap">Personnel intermittent</div>
<div class="t" style="left:231px;top:347px;width:73px;height:18px;line-height:21px;text-align:left;padding-left:1px;box-sizing:border-box;letter-spacing:-0.396px;color:#280a30;overflow:hidden;white-space:nowrap">RomainRO...</div>
<div class="t" style="left:305px;top:347px;width:82px;height:18px;line-height:21px;text-align:center;letter-spacing:-0.1px;color:#280a30;overflow:hidden;white-space:nowrap">Romain</div>
<div class="t" style="left:388px;top:347px;width:108px;height:18px;line-height:21px;text-align:center;letter-spacing:-0.1px;color:#280a30;overflow:hidden;white-space:nowrap">ROCHEBOIS</div>
<div class="t" style="left:497px;top:347px;width:134px;height:18px;line-height:21px;text-align:left;padding-left:2px;box-sizing:border-box;letter-spacing:-0.1px;color:#280a30;overflow:hidden;white-space:nowrap">Régisseur général</div>
<div class="t" style="left:632px;top:347px;width:52px;height:18px;line-height:21px;text-align:right;padding-right:4px;box-sizing:border-box;letter-spacing:-0.1px;color:#280a30;overflow:hidden;white-space:nowrap">150,00 €</div>
<div class="t" style="left:685px;top:347px;width:101px;height:18px;line-height:21px;text-align:center;letter-spacing:-0.1px;color:#280a30;overflow:hidden;white-space:nowrap">1/J</div>
<div class="t" style="left:787px;top:347px;width:89px;height:18px;line-height:21px;text-align:right;padding-right:4px;box-sizing:border-box;letter-spacing:-0.1px;color:#280a30;overflow:hidden;white-space:nowrap">150,00 €</div>
<div class="t" style="left:877px;top:347px;width:59px;height:18px;line-height:21px;text-align:center;letter-spacing:-0.1px;color:#280a30;overflow:hidden;white-space:nowrap">60,00%</div>
<div class="t" style="left:937px;top:347px;width:59px;height:18px;line-height:21px;text-align:right;padding-right:4px;box-sizing:border-box;letter-spacing:-0.1px;color:#280a30;overflow:hidden;white-space:nowrap">90,00 €</div>
<div class="t" style="left:997px;top:347px;width:95px;height:18px;line-height:21px;text-align:right;padding-right:4px;box-sizing:border-box;letter-spacing:-0.1px;color:#280a30;overflow:hidden;white-space:nowrap">240,00 €</div>
<div class="gcb" style="left:16px;top:370px"><i></i></div>
<div class="gcb" style="left:41px;top:370px"></div>
<div class="gcb" style="left:66px;top:370px"></div>
<div class="t" style="left:85px;top:366px;width:145px;height:18px;line-height:21px;text-align:center;letter-spacing:-0.1px;color:#9a9a9a;overflow:hidden;white-space:nowrap">Personnel intermittent</div>
<div class="t" style="left:231px;top:366px;width:73px;height:18px;line-height:21px;text-align:left;padding-left:1px;box-sizing:border-box;letter-spacing:-0.322px;color:#9a9a9a;overflow:hidden;white-space:nowrap">EmeriqueS...</div>
<div class="t" style="left:305px;top:366px;width:82px;height:18px;line-height:21px;text-align:center;letter-spacing:-0.1px;color:#9a9a9a;overflow:hidden;white-space:nowrap">Emerique</div>
<div class="t" style="left:388px;top:366px;width:108px;height:18px;line-height:21px;text-align:center;letter-spacing:-0.1px;color:#9a9a9a;overflow:hidden;white-space:nowrap">SAIRADELLE</div>
<div class="t" style="left:497px;top:366px;width:134px;height:18px;line-height:21px;text-align:left;padding-left:2px;box-sizing:border-box;letter-spacing:-0.1px;color:#9a9a9a;overflow:hidden;white-space:nowrap">Musicien</div>
<div class="t" style="left:632px;top:366px;width:52px;height:18px;line-height:21px;text-align:right;padding-right:4px;box-sizing:border-box;letter-spacing:-0.1px;color:#9a9a9a;overflow:hidden;white-space:nowrap">0,00 €</div>
<div class="t" style="left:685px;top:366px;width:101px;height:18px;line-height:21px;text-align:center;letter-spacing:-0.1px;color:#9a9a9a;overflow:hidden;white-space:nowrap">2:30</div>
<div class="t" style="left:787px;top:366px;width:89px;height:18px;line-height:21px;text-align:right;padding-right:4px;box-sizing:border-box;letter-spacing:-0.1px;color:#9a9a9a;overflow:hidden;white-space:nowrap">0,00 €</div>
<div class="t" style="left:877px;top:366px;width:59px;height:18px;line-height:21px;text-align:center;letter-spacing:-0.1px;color:#9a9a9a;overflow:hidden;white-space:nowrap">60,00%</div>
<div class="t" style="left:937px;top:366px;width:59px;height:18px;line-height:21px;text-align:right;padding-right:4px;box-sizing:border-box;letter-spacing:-0.1px;color:#9a9a9a;overflow:hidden;white-space:nowrap">0,00 €</div>
<div class="t" style="left:997px;top:366px;width:95px;height:18px;line-height:21px;text-align:right;padding-right:4px;box-sizing:border-box;letter-spacing:-0.1px;color:#9a9a9a;overflow:hidden;white-space:nowrap">0,00 €</div>
<div class="gcb" style="left:16px;top:389px"><i></i></div>
<div class="gcb" style="left:41px;top:389px"></div>
<div class="gcb" style="left:66px;top:389px"></div>
<div class="t" style="left:85px;top:385px;width:145px;height:18px;line-height:21px;text-align:center;font-weight:bold;letter-spacing:-0.15px;overflow:hidden;white-space:nowrap">Personnel permanent</div>
<div class="t" style="left:231px;top:385px;width:73px;height:18px;line-height:21px;text-align:left;padding-left:1px;box-sizing:border-box;font-weight:bold;letter-spacing:-0.175px;overflow:hidden;white-space:nowrap">AymerickS...</div>
<div class="t" style="left:305px;top:385px;width:82px;height:18px;line-height:21px;text-align:center;font-weight:bold;letter-spacing:-0.15px;overflow:hidden;white-space:nowrap">Aymerick</div>
<div class="t" style="left:388px;top:385px;width:108px;height:18px;line-height:21px;text-align:center;font-weight:bold;letter-spacing:-0.15px;overflow:hidden;white-space:nowrap">Serradeil</div>
<div class="t" style="left:497px;top:385px;width:134px;height:18px;line-height:21px;text-align:left;padding-left:2px;box-sizing:border-box;font-weight:bold;letter-spacing:-0.15px;overflow:hidden;white-space:nowrap">Opérateur Son</div>
<div class="t" style="left:632px;top:385px;width:52px;height:18px;line-height:21px;text-align:right;padding-right:4px;box-sizing:border-box;font-weight:bold;letter-spacing:-0.15px;overflow:hidden;white-space:nowrap">13,66 €</div>
<div class="t" style="left:685px;top:385px;width:101px;height:18px;line-height:21px;text-align:center;font-weight:bold;letter-spacing:-0.15px;overflow:hidden;white-space:nowrap">176:00</div>
<div class="t" style="left:787px;top:385px;width:89px;height:18px;line-height:21px;text-align:right;padding-right:4px;box-sizing:border-box;font-weight:bold;letter-spacing:-0.15px;overflow:hidden;white-space:nowrap">2 404,16 €</div>
<div class="t" style="left:877px;top:385px;width:59px;height:18px;line-height:21px;text-align:center;font-weight:bold;letter-spacing:-0.15px;overflow:hidden;white-space:nowrap">45,00%</div>
<div class="t" style="left:937px;top:385px;width:59px;height:18px;line-height:21px;text-align:right;padding-right:4px;box-sizing:border-box;font-weight:bold;letter-spacing:-0.15px;overflow:hidden;white-space:nowrap">1 081,87 €</div>
<div class="t" style="left:997px;top:385px;width:95px;height:18px;line-height:21px;text-align:right;padding-right:4px;box-sizing:border-box;font-weight:bold;letter-spacing:-0.15px;overflow:hidden;white-space:nowrap">3 486,03 €</div>
<div class="gcb" style="left:16px;top:408px"><i></i></div>
<div class="gcb" style="left:41px;top:408px"></div>
<div class="gcb" style="left:66px;top:408px"></div>
<div class="t" style="left:85px;top:404px;width:145px;height:18px;line-height:21px;text-align:center;font-weight:bold;letter-spacing:-0.15px;overflow:hidden;white-space:nowrap">Personnel permanent</div>
<div class="t" style="left:231px;top:404px;width:73px;height:18px;line-height:21px;text-align:left;padding-left:1px;box-sizing:border-box;font-weight:bold;letter-spacing:-0.175px;overflow:hidden;white-space:nowrap">AymerickS...</div>
<div class="t" style="left:305px;top:404px;width:82px;height:18px;line-height:21px;text-align:center;font-weight:bold;letter-spacing:-0.15px;overflow:hidden;white-space:nowrap">Aymerick</div>
<div class="t" style="left:388px;top:404px;width:108px;height:18px;line-height:21px;text-align:center;font-weight:bold;letter-spacing:-0.15px;overflow:hidden;white-space:nowrap">Serradeil</div>
<div class="t" style="left:497px;top:404px;width:134px;height:18px;line-height:21px;text-align:left;padding-left:2px;box-sizing:border-box;font-weight:bold;letter-spacing:-0.15px;overflow:hidden;white-space:nowrap">Musicien</div>
<div class="t" style="left:632px;top:404px;width:52px;height:18px;line-height:21px;text-align:right;padding-right:4px;box-sizing:border-box;font-weight:bold;letter-spacing:-0.15px;overflow:hidden;white-space:nowrap">0,00 €</div>
<div class="t" style="left:685px;top:404px;width:101px;height:18px;line-height:21px;text-align:center;font-weight:bold;letter-spacing:-0.15px;overflow:hidden;white-space:nowrap">2:30</div>
<div class="t" style="left:787px;top:404px;width:89px;height:18px;line-height:21px;text-align:right;padding-right:4px;box-sizing:border-box;font-weight:bold;letter-spacing:-0.15px;overflow:hidden;white-space:nowrap">0,00 €</div>
<div class="t" style="left:877px;top:404px;width:59px;height:18px;line-height:21px;text-align:center;font-weight:bold;letter-spacing:-0.15px;overflow:hidden;white-space:nowrap">45,00%</div>
<div class="t" style="left:937px;top:404px;width:59px;height:18px;line-height:21px;text-align:right;padding-right:4px;box-sizing:border-box;font-weight:bold;letter-spacing:-0.15px;overflow:hidden;white-space:nowrap">0,00 €</div>
<div class="t" style="left:997px;top:404px;width:95px;height:18px;line-height:21px;text-align:right;padding-right:4px;box-sizing:border-box;font-weight:bold;letter-spacing:-0.15px;overflow:hidden;white-space:nowrap">0,00 €</div>
<div class="gcb" style="left:16px;top:427px"><i></i></div>
<div class="gcb" style="left:41px;top:427px"></div>
<div class="gcb" style="left:66px;top:427px"></div>
<div class="t" style="left:85px;top:423px;width:145px;height:18px;line-height:21px;text-align:center;font-weight:bold;letter-spacing:-0.15px;overflow:hidden;white-space:nowrap">Personnel permanent</div>
<div class="t" style="left:231px;top:423px;width:73px;height:18px;line-height:21px;text-align:left;padding-left:1px;box-sizing:border-box;font-weight:bold;letter-spacing:-0.221px;overflow:hidden;white-space:nowrap">Non nomin...</div>
<div class="t" style="left:305px;top:423px;width:82px;height:18px;line-height:21px;text-align:center;font-weight:bold;letter-spacing:-0.15px;overflow:hidden;white-space:nowrap">...</div>
<div class="t" style="left:388px;top:423px;width:108px;height:18px;line-height:21px;text-align:center;font-weight:bold;letter-spacing:-0.15px;overflow:hidden;white-space:nowrap">...</div>
<div class="t" style="left:497px;top:423px;width:134px;height:18px;line-height:21px;text-align:left;padding-left:2px;box-sizing:border-box;font-weight:bold;letter-spacing:-0.15px;overflow:hidden;white-space:nowrap">Directeur technique</div>
<div class="t" style="left:632px;top:423px;width:52px;height:18px;line-height:21px;text-align:right;padding-right:4px;box-sizing:border-box;font-weight:bold;letter-spacing:-0.15px;overflow:hidden;white-space:nowrap">0,00 €</div>
<div class="t" style="left:685px;top:423px;width:101px;height:18px;line-height:21px;text-align:center;font-weight:bold;letter-spacing:-0.15px;overflow:hidden;white-space:nowrap">4:30</div>
<div class="t" style="left:787px;top:423px;width:89px;height:18px;line-height:21px;text-align:right;padding-right:4px;box-sizing:border-box;font-weight:bold;letter-spacing:-0.15px;overflow:hidden;white-space:nowrap">0,00 €</div>
<div class="t" style="left:877px;top:423px;width:59px;height:18px;line-height:21px;text-align:center;font-weight:bold;letter-spacing:-0.15px;overflow:hidden;white-space:nowrap">63,00%</div>
<div class="t" style="left:937px;top:423px;width:59px;height:18px;line-height:21px;text-align:right;padding-right:4px;box-sizing:border-box;font-weight:bold;letter-spacing:-0.15px;overflow:hidden;white-space:nowrap">0,00 €</div>
<div class="t" style="left:997px;top:423px;width:95px;height:18px;line-height:21px;text-align:right;padding-right:4px;box-sizing:border-box;font-weight:bold;letter-spacing:-0.15px;overflow:hidden;white-space:nowrap">0,00 €</div>
<div class="gcb" style="left:16px;top:446px"><i></i></div>
<div class="gcb" style="left:41px;top:446px"></div>
<div class="gcb" style="left:66px;top:446px"></div>
<div class="t" style="left:85px;top:442px;width:145px;height:18px;line-height:21px;text-align:center;font-weight:bold;letter-spacing:-0.15px;overflow:hidden;white-space:nowrap">Personnel permanent</div>
<div class="t" style="left:231px;top:442px;width:73px;height:18px;line-height:21px;text-align:left;padding-left:1px;box-sizing:border-box;font-weight:bold;letter-spacing:-0.221px;overflow:hidden;white-space:nowrap">Non nomin...</div>
<div class="t" style="left:305px;top:442px;width:82px;height:18px;line-height:21px;text-align:center;font-weight:bold;letter-spacing:-0.15px;overflow:hidden;white-space:nowrap">...</div>
<div class="t" style="left:388px;top:442px;width:108px;height:18px;line-height:21px;text-align:center;font-weight:bold;letter-spacing:-0.15px;overflow:hidden;white-space:nowrap">...</div>
<div class="t" style="left:497px;top:442px;width:134px;height:18px;line-height:21px;text-align:left;padding-left:2px;box-sizing:border-box;font-weight:bold;letter-spacing:-0.15px;overflow:hidden;white-space:nowrap">Directeur</div>
<div class="t" style="left:632px;top:442px;width:52px;height:18px;line-height:21px;text-align:right;padding-right:4px;box-sizing:border-box;font-weight:bold;letter-spacing:-0.15px;overflow:hidden;white-space:nowrap">0,00 €</div>
<div class="t" style="left:685px;top:442px;width:101px;height:18px;line-height:21px;text-align:center;font-weight:bold;letter-spacing:-0.15px;overflow:hidden;white-space:nowrap">2:30</div>
<div class="t" style="left:787px;top:442px;width:89px;height:18px;line-height:21px;text-align:right;padding-right:4px;box-sizing:border-box;font-weight:bold;letter-spacing:-0.15px;overflow:hidden;white-space:nowrap">0,00 €</div>
<div class="t" style="left:877px;top:442px;width:59px;height:18px;line-height:21px;text-align:center;font-weight:bold;letter-spacing:-0.15px;overflow:hidden;white-space:nowrap">63,00%</div>
<div class="t" style="left:937px;top:442px;width:59px;height:18px;line-height:21px;text-align:right;padding-right:4px;box-sizing:border-box;font-weight:bold;letter-spacing:-0.15px;overflow:hidden;white-space:nowrap">0,00 €</div>
<div class="t" style="left:997px;top:442px;width:95px;height:18px;line-height:21px;text-align:right;padding-right:4px;box-sizing:border-box;font-weight:bold;letter-spacing:-0.15px;overflow:hidden;white-space:nowrap">0,00 €</div>
<div class="gcb" style="left:16px;top:465px"><i></i></div>
<div class="gcb" style="left:41px;top:465px"></div>
<div class="gcb" style="left:66px;top:465px"></div>
<div class="t" style="left:85px;top:461px;width:145px;height:18px;line-height:21px;text-align:center;font-weight:bold;letter-spacing:-0.15px;overflow:hidden;white-space:nowrap">Personnel permanent</div>
<div class="t" style="left:231px;top:461px;width:73px;height:18px;line-height:21px;text-align:left;padding-left:1px;box-sizing:border-box;font-weight:bold;letter-spacing:-0.587px;overflow:hidden;white-space:nowrap">CaroleLER...</div>
<div class="t" style="left:305px;top:461px;width:82px;height:18px;line-height:21px;text-align:center;font-weight:bold;letter-spacing:-0.15px;overflow:hidden;white-space:nowrap">Carole</div>
<div class="t" style="left:388px;top:461px;width:108px;height:18px;line-height:21px;text-align:center;font-weight:bold;letter-spacing:-0.15px;overflow:hidden;white-space:nowrap">TARDIEU</div>
<div class="t" style="left:497px;top:461px;width:134px;height:18px;line-height:21px;text-align:left;padding-left:2px;box-sizing:border-box;font-weight:bold;letter-spacing:-0.15px;overflow:hidden;white-space:nowrap">Directrice adjointe</div>
<div class="t" style="left:632px;top:461px;width:52px;height:18px;line-height:21px;text-align:right;padding-right:4px;box-sizing:border-box;font-weight:bold;letter-spacing:-0.15px;overflow:hidden;white-space:nowrap">21,24 €</div>
<div class="t" style="left:685px;top:461px;width:101px;height:18px;line-height:21px;text-align:center;font-weight:bold;letter-spacing:-0.15px;overflow:hidden;white-space:nowrap">2:00</div>
<div class="t" style="left:787px;top:461px;width:89px;height:18px;line-height:21px;text-align:right;padding-right:4px;box-sizing:border-box;font-weight:bold;letter-spacing:-0.15px;overflow:hidden;white-space:nowrap">42,48 €</div>
<div class="t" style="left:877px;top:461px;width:59px;height:18px;line-height:21px;text-align:center;font-weight:bold;letter-spacing:-0.15px;overflow:hidden;white-space:nowrap">63,00%</div>
<div class="t" style="left:937px;top:461px;width:59px;height:18px;line-height:21px;text-align:right;padding-right:4px;box-sizing:border-box;font-weight:bold;letter-spacing:-0.15px;overflow:hidden;white-space:nowrap">26,76 €</div>
<div class="t" style="left:997px;top:461px;width:95px;height:18px;line-height:21px;text-align:right;padding-right:4px;box-sizing:border-box;font-weight:bold;letter-spacing:-0.15px;overflow:hidden;white-space:nowrap">69,24 €</div>
<div class="gcb" style="left:16px;top:484px"><i></i></div>
<div class="gcb" style="left:41px;top:484px"></div>
<div class="gcb" style="left:66px;top:484px"></div>
<div class="t" style="left:85px;top:480px;width:145px;height:18px;line-height:21px;text-align:center;font-weight:bold;letter-spacing:-0.15px;overflow:hidden;white-space:nowrap">Personnel permanent</div>
<div class="t" style="left:231px;top:480px;width:73px;height:18px;line-height:21px;text-align:left;padding-left:1px;box-sizing:border-box;font-weight:bold;letter-spacing:-0.587px;overflow:hidden;white-space:nowrap">CaroleLER...</div>
<div class="t" style="left:305px;top:480px;width:82px;height:18px;line-height:21px;text-align:center;font-weight:bold;letter-spacing:-0.15px;overflow:hidden;white-space:nowrap">Carole</div>
<div class="t" style="left:388px;top:480px;width:108px;height:18px;line-height:21px;text-align:center;font-weight:bold;letter-spacing:-0.15px;overflow:hidden;white-space:nowrap">TARDIEU</div>
<div class="t" style="left:497px;top:480px;width:134px;height:18px;line-height:21px;text-align:left;padding-left:1px;box-sizing:border-box;font-weight:bold;letter-spacing:-0.356px;overflow:hidden;white-space:nowrap">Responsable de la Co...</div>
<div class="t" style="left:632px;top:480px;width:52px;height:18px;line-height:21px;text-align:right;padding-right:4px;box-sizing:border-box;font-weight:bold;letter-spacing:-0.15px;overflow:hidden;white-space:nowrap">15,31 €</div>
<div class="t" style="left:685px;top:480px;width:101px;height:18px;line-height:21px;text-align:center;font-weight:bold;letter-spacing:-0.15px;overflow:hidden;white-space:nowrap">3:00</div>
<div class="t" style="left:787px;top:480px;width:89px;height:18px;line-height:21px;text-align:right;padding-right:4px;box-sizing:border-box;font-weight:bold;letter-spacing:-0.15px;overflow:hidden;white-space:nowrap">45,93 €</div>
<div class="t" style="left:877px;top:480px;width:59px;height:18px;line-height:21px;text-align:center;font-weight:bold;letter-spacing:-0.15px;overflow:hidden;white-space:nowrap">63,00%</div>
<div class="t" style="left:937px;top:480px;width:59px;height:18px;line-height:21px;text-align:right;padding-right:4px;box-sizing:border-box;font-weight:bold;letter-spacing:-0.15px;overflow:hidden;white-space:nowrap">28,94 €</div>
<div class="t" style="left:997px;top:480px;width:95px;height:18px;line-height:21px;text-align:right;padding-right:4px;box-sizing:border-box;font-weight:bold;letter-spacing:-0.15px;overflow:hidden;white-space:nowrap">74,87 €</div>
<div class="gcb" style="left:16px;top:503px"><i></i></div>
<div class="gcb" style="left:41px;top:503px"></div>
<div class="gcb" style="left:66px;top:503px"></div>
<div class="t" style="left:85px;top:499px;width:145px;height:18px;line-height:21px;text-align:center;font-weight:bold;letter-spacing:-0.15px;overflow:hidden;white-space:nowrap">Personnel permanent</div>
<div class="t" style="left:231px;top:499px;width:73px;height:18px;line-height:21px;text-align:left;padding-left:1px;box-sizing:border-box;font-weight:bold;letter-spacing:-0.266px;overflow:hidden;white-space:nowrap">ManonRO...</div>
<div class="t" style="left:305px;top:499px;width:82px;height:18px;line-height:21px;text-align:center;font-weight:bold;letter-spacing:-0.15px;overflow:hidden;white-space:nowrap">Manon</div>
<div class="t" style="left:388px;top:499px;width:108px;height:18px;line-height:21px;text-align:center;font-weight:bold;letter-spacing:-0.15px;overflow:hidden;white-space:nowrap">ROYEAU</div>
<div class="t" style="left:497px;top:499px;width:134px;height:18px;line-height:21px;text-align:left;padding-left:2px;box-sizing:border-box;font-weight:bold;letter-spacing:-0.15px;overflow:hidden;white-space:nowrap">Secrétaire</div>
<div class="t" style="left:632px;top:499px;width:52px;height:18px;line-height:21px;text-align:right;padding-right:4px;box-sizing:border-box;font-weight:bold;letter-spacing:-0.15px;overflow:hidden;white-space:nowrap">150,00 €</div>
<div class="t" style="left:685px;top:499px;width:101px;height:18px;line-height:21px;text-align:center;font-weight:bold;letter-spacing:-0.15px;overflow:hidden;white-space:nowrap">2</div>
<div class="t" style="left:787px;top:499px;width:89px;height:18px;line-height:21px;text-align:right;padding-right:4px;box-sizing:border-box;font-weight:bold;letter-spacing:-0.15px;overflow:hidden;white-space:nowrap">300,00 €</div>
<div class="t" style="left:877px;top:499px;width:59px;height:18px;line-height:21px;text-align:center;font-weight:bold;letter-spacing:-0.15px;overflow:hidden;white-space:nowrap">45,00%</div>
<div class="t" style="left:937px;top:499px;width:59px;height:18px;line-height:21px;text-align:right;padding-right:4px;box-sizing:border-box;font-weight:bold;letter-spacing:-0.15px;overflow:hidden;white-space:nowrap">135,00 €</div>
<div class="t" style="left:997px;top:499px;width:95px;height:18px;line-height:21px;text-align:right;padding-right:4px;box-sizing:border-box;font-weight:bold;letter-spacing:-0.15px;overflow:hidden;white-space:nowrap">435,00 €</div>
<div class="gcb" style="left:16px;top:522px"><i></i></div>
<div class="gcb" style="left:41px;top:522px"></div>
<div class="gcb" style="left:66px;top:522px"></div>
<div class="t" style="left:85px;top:518px;width:145px;height:18px;line-height:21px;text-align:center;letter-spacing:-0.1px;color:#1a1a1a;overflow:hidden;white-space:nowrap">Personnel permanent</div>
<div class="t" style="left:231px;top:518px;width:73px;height:18px;line-height:21px;text-align:left;padding-left:1px;box-sizing:border-box;letter-spacing:-0.249px;color:#1a1a1a;overflow:hidden;white-space:nowrap">Juan-Lucos...</div>
<div class="t" style="left:305px;top:518px;width:82px;height:18px;line-height:21px;text-align:center;letter-spacing:-0.1px;color:#1a1a1a;overflow:hidden;white-space:nowrap">Juan-Lucos</div>
<div class="t" style="left:388px;top:518px;width:108px;height:18px;line-height:21px;text-align:center;letter-spacing:-0.1px;color:#1a1a1a;overflow:hidden;white-space:nowrap">GALINÉTAS</div>
<div class="t" style="left:497px;top:518px;width:134px;height:18px;line-height:21px;text-align:left;padding-left:2px;box-sizing:border-box;letter-spacing:-0.1px;color:#1a1a1a;overflow:hidden;white-space:nowrap">Electricien</div>
<div class="t" style="left:632px;top:518px;width:52px;height:18px;line-height:21px;text-align:right;padding-right:4px;box-sizing:border-box;letter-spacing:-0.1px;color:#1a1a1a;overflow:hidden;white-space:nowrap">13,66 €</div>
<div class="t" style="left:685px;top:518px;width:101px;height:18px;line-height:21px;text-align:center;letter-spacing:-0.1px;color:#1a1a1a;overflow:hidden;white-space:nowrap">120:00</div>
<div class="t" style="left:787px;top:518px;width:89px;height:18px;line-height:21px;text-align:right;padding-right:4px;box-sizing:border-box;letter-spacing:-0.1px;color:#1a1a1a;overflow:hidden;white-space:nowrap">1 639,20 €</div>
<div class="t" style="left:877px;top:518px;width:59px;height:18px;line-height:21px;text-align:center;letter-spacing:-0.1px;color:#1a1a1a;overflow:hidden;white-space:nowrap">60,00%</div>
<div class="t" style="left:937px;top:518px;width:59px;height:18px;line-height:21px;text-align:right;padding-right:4px;box-sizing:border-box;letter-spacing:-0.1px;color:#1a1a1a;overflow:hidden;white-space:nowrap">983,52 €</div>
<div class="t" style="left:997px;top:518px;width:95px;height:18px;line-height:21px;text-align:right;padding-right:4px;box-sizing:border-box;letter-spacing:-0.1px;color:#1a1a1a;overflow:hidden;white-space:nowrap">2 622,72 €</div>
<div class="gcb" style="left:16px;top:541px"><i></i></div>
<div class="gcb" style="left:41px;top:541px"></div>
<div class="gcb" style="left:66px;top:541px"></div>
<div class="t" style="left:85px;top:537px;width:145px;height:18px;line-height:21px;text-align:center;font-weight:bold;letter-spacing:-0.15px;overflow:hidden;white-space:nowrap">Personnel permanent</div>
<div class="t" style="left:231px;top:537px;width:73px;height:18px;line-height:21px;text-align:left;padding-left:1px;box-sizing:border-box;font-weight:bold;letter-spacing:-0.470px;overflow:hidden;white-space:nowrap">FabienTAR...</div>
<div class="t" style="left:305px;top:537px;width:82px;height:18px;line-height:21px;text-align:center;font-weight:bold;letter-spacing:-0.15px;overflow:hidden;white-space:nowrap">Fabien</div>
<div class="t" style="left:388px;top:537px;width:108px;height:18px;line-height:21px;text-align:center;font-weight:bold;letter-spacing:-0.15px;overflow:hidden;white-space:nowrap">TARDIEU</div>
<div class="t" style="left:497px;top:537px;width:134px;height:18px;line-height:21px;text-align:left;padding-left:2px;box-sizing:border-box;font-weight:bold;letter-spacing:-0.15px;overflow:hidden;white-space:nowrap">Directeur technique</div>
<div class="t" style="left:632px;top:537px;width:52px;height:18px;line-height:21px;text-align:right;padding-right:4px;box-sizing:border-box;font-weight:bold;letter-spacing:-0.15px;overflow:hidden;white-space:nowrap">0,00 €</div>
<div class="t" style="left:685px;top:537px;width:101px;height:18px;line-height:21px;text-align:center;font-weight:bold;letter-spacing:-0.15px;overflow:hidden;white-space:nowrap">1:00</div>
<div class="t" style="left:787px;top:537px;width:89px;height:18px;line-height:21px;text-align:right;padding-right:4px;box-sizing:border-box;font-weight:bold;letter-spacing:-0.15px;overflow:hidden;white-space:nowrap">0,00 €</div>
<div class="t" style="left:877px;top:537px;width:59px;height:18px;line-height:21px;text-align:center;font-weight:bold;letter-spacing:-0.15px;overflow:hidden;white-space:nowrap">45,00%</div>
<div class="t" style="left:937px;top:537px;width:59px;height:18px;line-height:21px;text-align:right;padding-right:4px;box-sizing:border-box;font-weight:bold;letter-spacing:-0.15px;overflow:hidden;white-space:nowrap">0,00 €</div>
<div class="t" style="left:997px;top:537px;width:95px;height:18px;line-height:21px;text-align:right;padding-right:4px;box-sizing:border-box;font-weight:bold;letter-spacing:-0.15px;overflow:hidden;white-space:nowrap">0,00 €</div>
<div class="gcb" style="left:16px;top:560px"><i></i></div>
<div class="gcb" style="left:41px;top:560px"></div>
<div class="gcb" style="left:66px;top:560px"></div>
<div class="t" style="left:85px;top:556px;width:145px;height:18px;line-height:21px;text-align:center;font-weight:bold;letter-spacing:-0.15px;overflow:hidden;white-space:nowrap">Personnel permanent</div>
<div class="t" style="left:231px;top:556px;width:73px;height:18px;line-height:21px;text-align:left;padding-left:1px;box-sizing:border-box;font-weight:bold;letter-spacing:-0.411px;overflow:hidden;white-space:nowrap">BaptisteCL...</div>
<div class="t" style="left:305px;top:556px;width:82px;height:18px;line-height:21px;text-align:center;font-weight:bold;letter-spacing:-0.15px;overflow:hidden;white-space:nowrap">Baptiste</div>
<div class="t" style="left:388px;top:556px;width:108px;height:18px;line-height:21px;text-align:center;font-weight:bold;letter-spacing:-0.15px;overflow:hidden;white-space:nowrap">CLAVIRE</div>
<div class="t" style="left:497px;top:556px;width:134px;height:18px;line-height:21px;text-align:left;padding-left:2px;box-sizing:border-box;font-weight:bold;letter-spacing:-0.15px;overflow:hidden;white-space:nowrap">Opérateur Son</div>
<div class="t" style="left:632px;top:556px;width:52px;height:18px;line-height:21px;text-align:right;padding-right:4px;box-sizing:border-box;font-weight:bold;letter-spacing:-0.15px;overflow:hidden;white-space:nowrap">0,00 €</div>
<div class="t" style="left:685px;top:556px;width:101px;height:18px;line-height:21px;text-align:center;font-weight:bold;letter-spacing:-0.15px;overflow:hidden;white-space:nowrap">7</div>
<div class="t" style="left:787px;top:556px;width:89px;height:18px;line-height:21px;text-align:right;padding-right:4px;box-sizing:border-box;font-weight:bold;letter-spacing:-0.15px;overflow:hidden;white-space:nowrap">0,00 €</div>
<div class="t" style="left:877px;top:556px;width:59px;height:18px;line-height:21px;text-align:center;font-weight:bold;letter-spacing:-0.15px;overflow:hidden;white-space:nowrap">45,00%</div>
<div class="t" style="left:937px;top:556px;width:59px;height:18px;line-height:21px;text-align:right;padding-right:4px;box-sizing:border-box;font-weight:bold;letter-spacing:-0.15px;overflow:hidden;white-space:nowrap">0,00 €</div>
<div class="t" style="left:997px;top:556px;width:95px;height:18px;line-height:21px;text-align:right;padding-right:4px;box-sizing:border-box;font-weight:bold;letter-spacing:-0.15px;overflow:hidden;white-space:nowrap">0,00 €</div>
<div class="a" style="left:84px;top:290px;width:1052px;height:18px;box-sizing:border-box;border:1px dotted #000;border-right:none;"></div>
<div class="a" style="left:34px;top:290px;width:1px;height:286px;background:rgba(0,0,0,0.42);"></div>
<div class="a" style="left:59px;top:290px;width:1px;height:286px;background:rgba(0,0,0,0.42);"></div>
<div class="a" style="left:84px;top:290px;width:1px;height:286px;background:rgba(0,0,0,0.42);"></div>
<div class="a" style="left:230px;top:290px;width:1px;height:286px;background:rgba(0,0,0,0.42);"></div>
<div class="a" style="left:304px;top:290px;width:1px;height:286px;background:rgba(0,0,0,0.42);"></div>
<div class="a" style="left:387px;top:290px;width:1px;height:286px;background:rgba(0,0,0,0.42);"></div>
<div class="a" style="left:496px;top:290px;width:1px;height:286px;background:rgba(0,0,0,0.42);"></div>
<div class="a" style="left:631px;top:290px;width:1px;height:286px;background:rgba(0,0,0,0.42);"></div>
<div class="a" style="left:684px;top:290px;width:1px;height:286px;background:rgba(0,0,0,0.42);"></div>
<div class="a" style="left:786px;top:290px;width:1px;height:286px;background:rgba(0,0,0,0.42);"></div>
<div class="a" style="left:876px;top:290px;width:1px;height:286px;background:rgba(0,0,0,0.42);"></div>
<div class="a" style="left:936px;top:290px;width:1px;height:286px;background:rgba(0,0,0,0.42);"></div>
<div class="a" style="left:996px;top:290px;width:1px;height:286px;background:rgba(0,0,0,0.42);"></div>
<div class="a" style="left:1092px;top:290px;width:1px;height:286px;background:rgba(0,0,0,0.42);"></div>
<div class="a" style="left:1144px;top:309px;width:1px;height:154px;background:#8a8a8a;"></div>
<div class="a" style="left:324px;top:583px;width:434px;height:2px;background:#8c8c8c;"></div>
<div class="a" style="left:10px;top:593px;width:1143px;height:1px;background:rgba(0,0,0,0.42);"></div>
<div class="a" style="left:10px;top:612px;width:1143px;height:1px;background:rgba(0,0,0,0.42);"></div>
<div class="a" style="left:304px;top:593px;width:1px;height:20px;background:rgba(0,0,0,0.42);"></div>
<div class="a" style="left:387px;top:593px;width:1px;height:20px;background:rgba(0,0,0,0.42);"></div>
<div class="a" style="left:496px;top:593px;width:1px;height:20px;background:rgba(0,0,0,0.42);"></div>
<div class="a" style="left:631px;top:593px;width:1px;height:20px;background:rgba(0,0,0,0.42);"></div>
<div class="a" style="left:684px;top:593px;width:1px;height:20px;background:rgba(0,0,0,0.42);"></div>
<div class="a" style="left:786px;top:593px;width:1px;height:20px;background:rgba(0,0,0,0.42);"></div>
<div class="a" style="left:876px;top:593px;width:1px;height:20px;background:rgba(0,0,0,0.42);"></div>
<div class="a" style="left:936px;top:593px;width:1px;height:20px;background:rgba(0,0,0,0.42);"></div>
<div class="a" style="left:996px;top:593px;width:1px;height:20px;background:rgba(0,0,0,0.42);"></div>
<div class="a" style="left:1092px;top:593px;width:1px;height:20px;background:rgba(0,0,0,0.42);"></div>
<div class="t" style="left:14.2px;top:595.8px;font-size:12px;letter-spacing:-0.259px;">Total :</div>
<div class="t" style="left:787px;top:593px;width:89px;line-height:19px;text-align:right;padding-right:4px;box-sizing:border-box;letter-spacing:-0.2px">6 089,45 €</div>
<div class="t" style="left:997px;top:593px;width:95px;line-height:19px;text-align:right;padding-right:4px;box-sizing:border-box;letter-spacing:-0.2px">9 207,85 €</div>
<svg class="a" style="left:569px;top:617px" width="24" height="6" viewBox="0 0 24 6"><rect x="1" y="0" width="1" height="5" fill="#b8b8b8"/><rect x="3" y="0" width="1" height="5" fill="#b8b8b8"/><rect x="5" y="0" width="1" height="5" fill="#b8b8b8"/><rect x="7" y="0" width="1" height="5" fill="#b8b8b8"/><rect x="9" y="0" width="1" height="5" fill="#b8b8b8"/><rect x="13" y="0" width="1" height="5" fill="#b8b8b8"/><rect x="15" y="0" width="1" height="5" fill="#b8b8b8"/><rect x="17" y="0" width="1" height="5" fill="#b8b8b8"/><rect x="19" y="0" width="1" height="5" fill="#b8b8b8"/><rect x="21" y="0" width="1" height="5" fill="#b8b8b8"/><rect x="11" y="0" width="2" height="5" fill="#2f8ad6"/></svg>
<div class="t" style="left:9.6px;top:623.3px;font-size:12px;letter-spacing:-0.024px;">Statistiques femmes / hommes</div>
<div class="a" style="left:9px;top:642px;width:1145px;height:124px;box-sizing:border-box;border:1px solid #d6d6d6;border-radius:5px;background:#fff;"></div>
<div class="t" style="left:13.4px;top:644.8px;font-size:12px;letter-spacing:0.036px;">Nombre de femme(s) = 4</div>
<div class="t" style="left:151.4px;top:644.8px;font-size:12px;letter-spacing:-0.084px;">/ Heures prévisionnel = 19:00</div>
<div class="t" style="left:308.9px;top:644.8px;font-size:12px;letter-spacing:-0.341px;">/ Heures réels = 19:00</div>
<div class="t" style="left:423.3px;top:644.8px;font-size:12px;letter-spacing:-0.090px;">/ Prévisionnel simple chargé =</div>
<div class="t" style="left:591.4px;top:644.8px;font-size:12px;letter-spacing:-0.141px;">1 014,11 € / Cout total =</div>
<div class="t" style="left:737.5px;top:644.8px;font-size:12px;letter-spacing:-0.123px;">0,00 € / Pourcentage de femmes =</div>
<div class="t" style="left:936.3px;top:644.8px;font-size:12px;letter-spacing:-0.490px;">26,67 %</div>
<div class="t" style="left:13.4px;top:659.8px;font-size:12px;letter-spacing:0.122px;">Nombre d'homme(s) = 9</div>
<div class="t" style="left:151.4px;top:659.8px;font-size:12px;letter-spacing:-0.060px;">/ Heures prévisionnel = 373:00</div>
<div class="t" style="left:316.2px;top:659.8px;font-size:12px;letter-spacing:-0.338px;">/ Heures réels = 373:00</div>
<div class="t" style="left:437px;top:659.8px;font-size:12px;letter-spacing:-0.080px;">/ Prévisionnel simple chargé =</div>
<div class="t" style="left:603.9px;top:659.8px;font-size:12px;letter-spacing:-0.161px;">7 670,00 € / Cout total =</div>
<div class="t" style="left:750.4px;top:659.8px;font-size:12px;letter-spacing:-0.047px;">0,00 € / Pourcentage d'hommes =</div>
<div class="t" style="left:947.4px;top:659.8px;font-size:12px;letter-spacing:-0.505px;">60,00 %</div>
<div class="t" style="left:13.4px;top:674.8px;font-size:12px;letter-spacing:-0.165px;">Non renseigné(s) = 2</div>
<div class="t" style="left:132.5px;top:674.8px;font-size:12px;letter-spacing:-0.032px;">/ Heures prévisionnel = 25:34</div>
<div class="t" style="left:291.5px;top:674.8px;font-size:12px;letter-spacing:-0.341px;">/ Heures réels = 25:34</div>
<div class="t" style="left:405.9px;top:674.8px;font-size:12px;letter-spacing:-0.044px;">/ Prévisionnel simple chargé =</div>
<div class="t" style="left:579.2px;top:674.8px;font-size:12px;letter-spacing:-0.105px;">523,74 € / Cout total =</div>
<div class="t" style="left:716.5px;top:674.8px;font-size:12px;letter-spacing:-0.153px;">0,00 € / Pourcentage non renseignés =</div>
<div class="t" style="left:936.3px;top:674.8px;font-size:12px;letter-spacing:-0.490px;">13,33 %</div>
<div class="t" style="left:13.4px;top:689.4px;font-size:12px;letter-spacing:-0.427px;">Liste personnel non renseigné(s) : sécurité01 Agentde, PRIER Lisa, PRIER Lisa, PRIER Lisa</div>
</body></html>
